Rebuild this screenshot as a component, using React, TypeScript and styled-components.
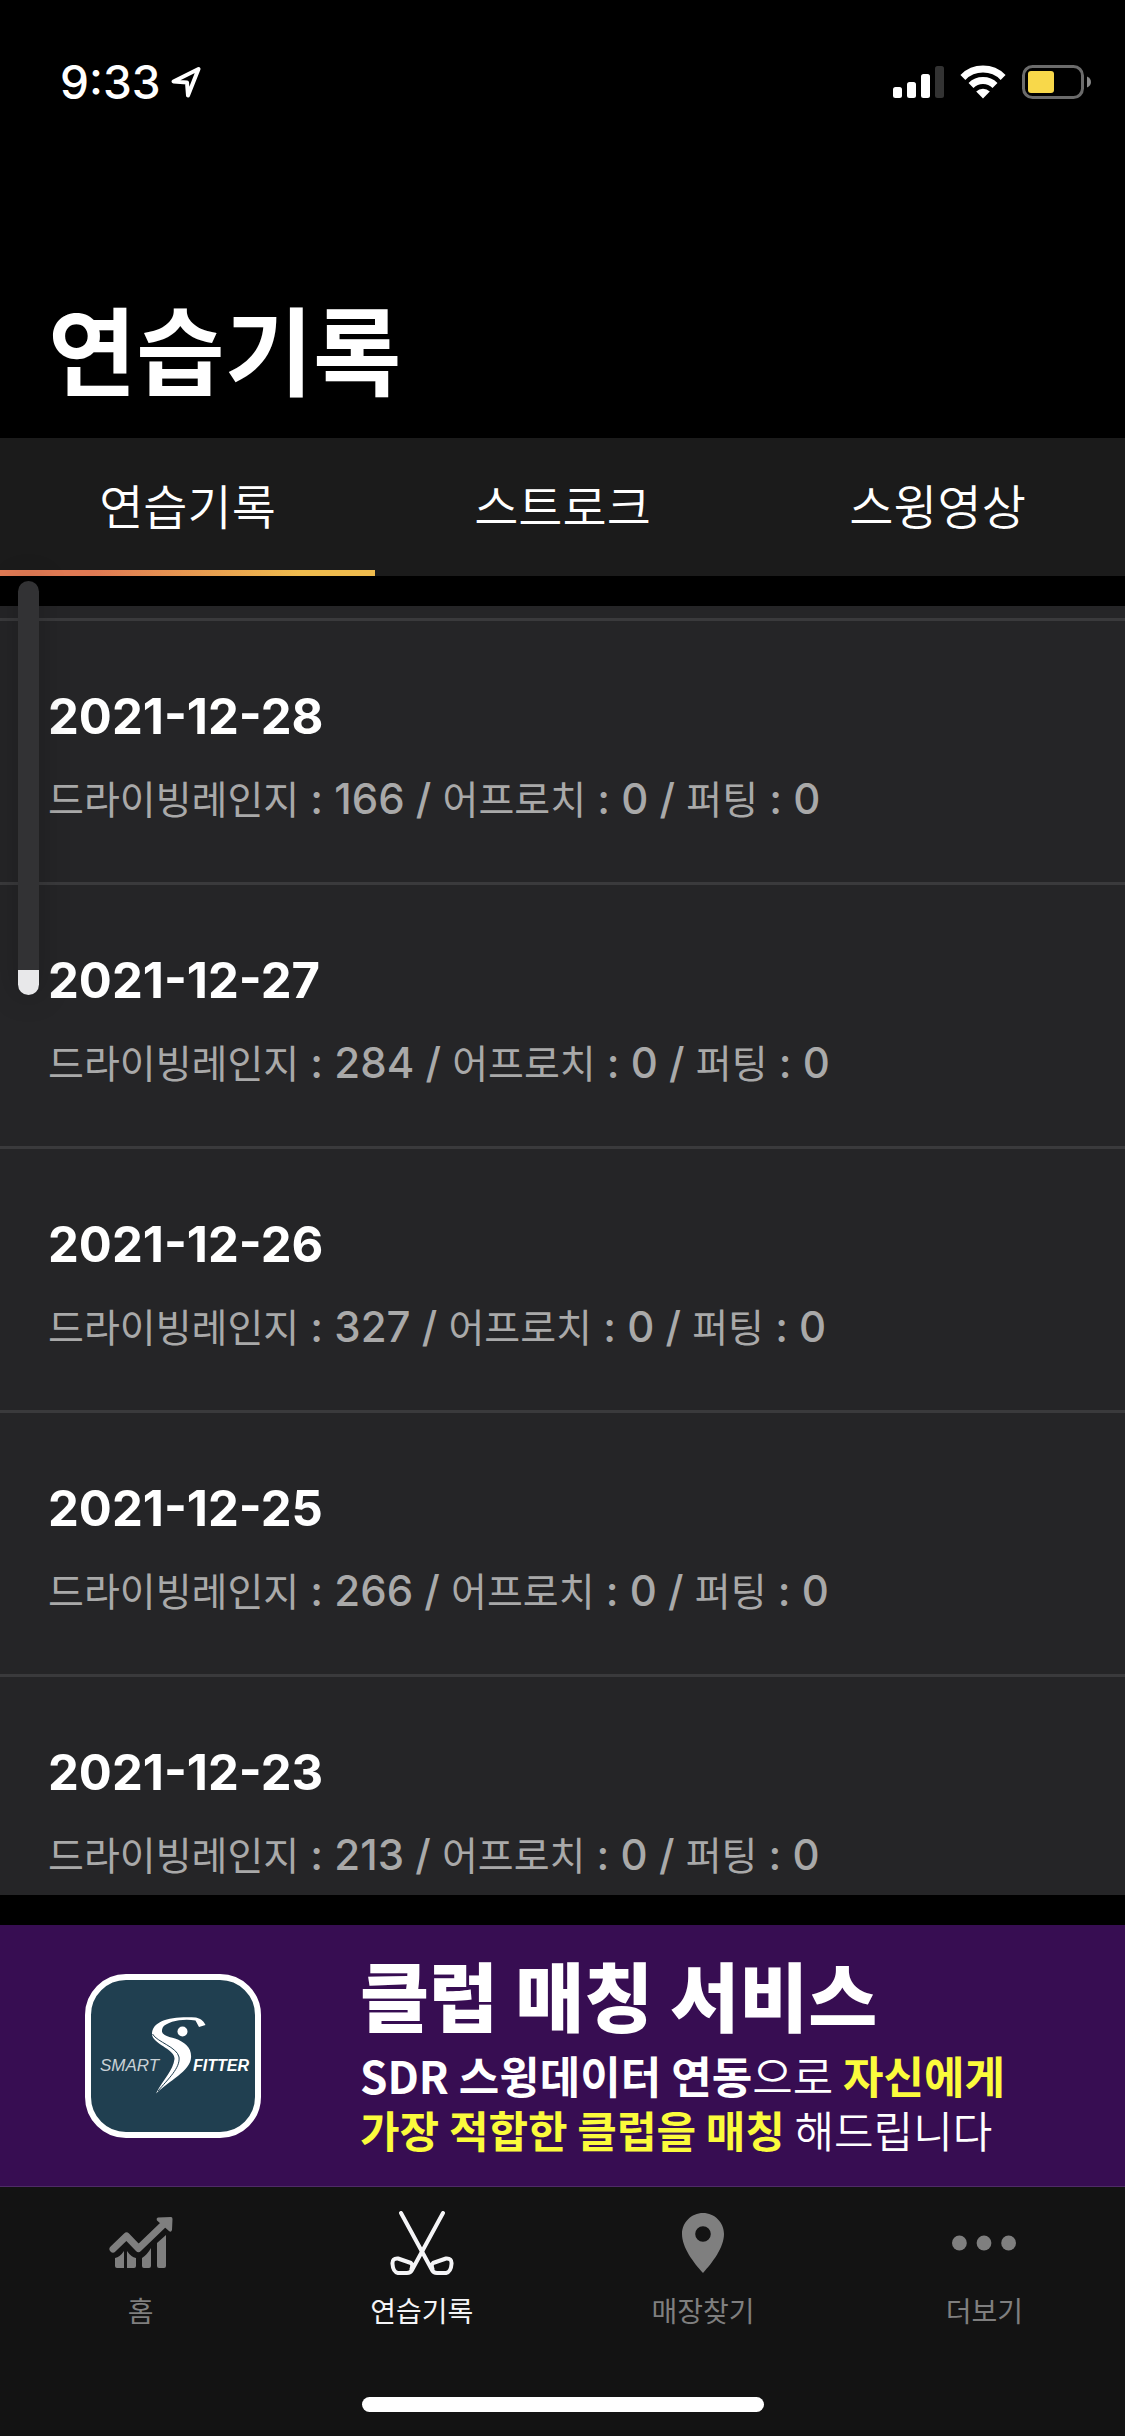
import React, { useState } from "react";
import styled, { createGlobalStyle } from "styled-components";

const GlobalStyle = createGlobalStyle`
  *, *::before, *::after { box-sizing: border-box; }
  body {
    margin: 0;
    background: #000;
    color: #fff;
    font-family: Inter, "Noto Sans CJK KR", sans-serif;
  }
  h1, h2, p { margin: 0; }
  button { font: inherit; color: inherit; background: none; border: 0; padding: 0; cursor: pointer; }
  a { color: inherit; text-decoration: none; }
`;

const Screen = styled.div`
  position: relative;
  display: flex;
  flex-direction: column;
  height: 100vh;
  background: #000;
`;

const StatusBar = styled.div`
  display: flex;
  align-items: center;
  justify-content: space-between;
  height: 164px;
  padding: 0 34px 0 60px;
`;

const StatusGroup = styled.div<{ $gap: number }>`
  display: flex;
  align-items: center;
  gap: ${(p) => p.$gap}px;
`;

const Clock = styled.span`
  font-size: 46px;
  line-height: 56px;
  font-weight: 500;
`;

const Header = styled.header`
  display: flex;
  align-items: flex-end;
  height: 274px;
  padding: 0 48px 37px;
`;

const Title = styled.h1`
  font-family: "Noto Sans CJK KR", sans-serif;
  font-size: 96px;
  line-height: 108px;
  font-weight: 700;
`;

const Tabs = styled.div`
  display: grid;
  grid-template-columns: repeat(3, 1fr);
  height: 138px;
  margin-bottom: 30px;
  background: #1b1b1b;
`;

const Tab = styled.button`
  position: relative;
  padding-bottom: 6px;
  font-family: "Noto Sans CJK KR", sans-serif;
  font-size: 48px;
  line-height: 60px;
  font-weight: 350;

  &[aria-selected="true"]::after {
    content: "";
    position: absolute;
    left: 0;
    right: 0;
    bottom: 0;
    height: 6px;
    background: linear-gradient(90deg, #e07a54 25%, #f0bc4e 80%);
  }
`;

const List = styled.ul`
  flex: 1;
  min-height: 0;
  overflow: hidden;
  margin: 0;
  padding: 12px 0 0;
  list-style: none;
  background: #252527;
`;

const Row = styled.li`
  height: 264px;
  padding: 64px 48px 0;
  border-top: 3px solid #3a3a3c;
`;

const RowDate = styled.h2`
  font-size: 49px;
  line-height: 64px;
  font-weight: 700;
`;

const RowDetail = styled.p`
  margin-top: 16px;
  font-size: 42px;
  line-height: 64px;
  font-weight: 450;
  color: #a9a9a9;
  white-space: nowrap;
`;

const Category = styled.span`
  font-family: "Noto Sans CJK KR", sans-serif;
  font-size: 39px;
  font-weight: 400;
`;

const Volume = styled.input<{ $level: number }>`
  position: absolute;
  top: 581px;
  left: 18px;
  width: 21px;
  height: 414px;
  margin: 0;
  appearance: none;
  writing-mode: vertical-lr;
  direction: rtl;
  border-radius: 11px;
  background: linear-gradient(0deg, #e8e8ea ${(p) => p.$level}%, #323234 ${(p) => p.$level}%);
  box-shadow: 0 0 30px rgba(0, 0, 0, 0.25);

  &::-webkit-slider-thumb {
    appearance: none;
    width: 21px;
    height: 1px;
    background: transparent;
  }
`;

const Banner = styled.a`
  display: flex;
  align-items: center;
  height: 262px;
  margin-top: 30px;
  padding-left: 85px;
  gap: 99px;
  background: #370d52;
  border-bottom: 1px solid #4f2a68;
  font-family: "Noto Sans CJK KR", sans-serif;
`;

const BannerCopy = styled.div`
  padding-bottom: 4px;
`;

const BannerTitle = styled.h2`
  margin-bottom: 12px;
  font-size: 75px;
  line-height: 84px;
  font-weight: 900;
`;

const BannerText = styled.p<{ $size: number }>`
  font-size: ${(p) => p.$size}px;
  line-height: 54px;
  font-weight: 350;
  white-space: nowrap;
`;

const Strong = styled.b<{ $accent?: boolean }>`
  font-weight: 700;
  color: ${(p) => (p.$accent ? "#fbfb3c" : "#fff")};
`;

const TabBar = styled.nav`
  position: relative;
  display: grid;
  grid-template-columns: repeat(4, 1fr);
  height: 249px;
  padding-top: 24px;
  background: #131313;
`;

const TabBarLink = styled.a`
  display: flex;
  flex-direction: column;
  align-items: center;
  gap: 15px;
  font-family: "Noto Sans CJK KR", sans-serif;
  font-size: 28px;
  line-height: 40px;
  color: #7f7f7f;

  &[aria-current="page"] { color: #f5f5f7; }
`;

const HomeIndicator = styled.div`
  position: absolute;
  left: 50%;
  bottom: 24px;
  width: 402px;
  height: 15px;
  margin-left: -201px;
  border-radius: 8px;
  background: #fff;
`;

const LocationIcon = () => (
  <svg width="30" height="32" viewBox="0 0 30 32" fill="none" stroke="#fff" strokeWidth="4" strokeLinejoin="round">
    <path d="M2.5 15.5 L27.5 3 L17 29.5 L16 16.5 Z" />
  </svg>
);

const SignalIcon = () => (
  <svg width="51" height="32" viewBox="0 0 51 32" fill="#fff">
    <rect x="0" y="21" width="9" height="11" rx="2.5" />
    <rect x="14" y="16" width="9" height="16" rx="2.5" />
    <rect x="28" y="8" width="9" height="24" rx="2.5" />
    <rect x="42" y="0" width="9" height="32" rx="2.5" fill="#333" />
  </svg>
);

const WifiIcon = () => (
  <svg width="46" height="34" viewBox="0 0 46 34" fill="none" stroke="#fff" strokeWidth="7">
    <path d="M2.9 12.4 A28.5 28.5 0 0 1 43.1 12.4" />
    <path d="M11 20.4 A17 17 0 0 1 35 20.4" />
    <path d="M23 33.5 L16.2 26.6 A9.6 9.6 0 0 1 29.8 26.6 Z" fill="#fff" stroke="none" />
  </svg>
);

const BatteryIcon = () => (
  <svg width="69" height="34" viewBox="0 0 69 34">
    <rect x="1.5" y="1.5" width="59" height="31" rx="9" fill="none" stroke="#6b6b6b" strokeWidth="3" />
    <rect x="6" y="6" width="26" height="22" rx="3" fill="#f8d84a" />
    <path d="M65 11.5 C70.3 13.5 70.3 20.5 65 22.5 Z" fill="#8a8a8a" />
  </svg>
);

const SmartFitterLogo = () => (
  <svg width="176" height="164" viewBox="0 0 176 164" fontFamily="Liberation Sans, sans-serif" fontStyle="italic" fontSize="17" fill="#fff">
    <rect x="3" y="3" width="170" height="158" rx="38" fill="#203f50" stroke="#fff" strokeWidth="6" />
    <path d="M120.5 51 L114 53 L110.5 46.5 C98 44 82 47.5 78 53 C74.5 60 80 62 90 64.5 C100 68 107 74 106 84 C105 97 84 107 71 119.5 C79 104 88 97 89.5 85 C90.5 75 67 70 67 60 C67 47 85 42 111 43.5 C115 44.5 118 46 120.5 51 Z" />
    <path d="M67.5 60 C72 68 92 73 94 83 C95.5 94 83 105 73 117" fill="none" stroke="#203f50" strokeWidth="1" />
    <circle cx="97.5" cy="57.5" r="5" />
    <text x="15" y="97" fill="#c9d1d6">SMART</text>
    <text x="108" y="97" fontWeight="700" fontSize="16">FITTER</text>
  </svg>
);

const ChartIcon = () => (
  <svg width="64" height="64" viewBox="0 0 64 64" fill="currentColor">
    <path d="M4 38 L17.5 25 L29.5 37.5 L55 13" fill="none" stroke="currentColor" strokeWidth="7" strokeLinecap="round" strokeLinejoin="round" />
    <path d="M49 6.5 L62 6 Q63.5 6 63.5 8 L63 19 Q62 22 60 20 L48 9.5 Q47 7 49 6.5 Z" />
    <path d="M6 47 Q11 46 15 40 V57 H8 Q6 57 6 55 Z" />
    <path d="M18 40 Q22 46 27 47 V55 Q27 57 25 57 H18 Z" />
    <path d="M33 47 Q38 44 42 37 V55 Q42 57 40 57 H35 Q33 57 33 55 Z" />
    <path d="M48 32 L57 24 V55 Q57 57 55 57 H50 Q48 57 48 55 Z" />
  </svg>
);

const ClubsIcon = () => (
  <svg width="64" height="64" viewBox="0 0 64 64" fill="none" stroke="currentColor" strokeWidth="4" strokeLinecap="round" strokeLinejoin="round">
    <path d="M53 2 L22 59 Q20.5 62 17 62 H8 Q3 61 2.5 53 Q2 47 8 47.5 L21 52 Q23 53.5 21.5 58" />
    <path d="M11 2 L42 59 Q43.5 62 47 62 H56 Q61 61 61.5 53 Q62 47 56 47.5 L43 52 Q41 53.5 42.5 58" />
  </svg>
);

const PinIcon = () => (
  <svg width="64" height="64" viewBox="0 0 64 64" fill="currentColor">
    <path fillRule="evenodd" d="M32 2 C43.6 2 53 11.4 53 23 C53 36.5 41.5 51.5 32 62 C22.5 51.5 11 36.5 11 23 C11 11.4 20.4 2 32 2 Z M32 15.2 A7.8 7.8 0 1 0 32 30.8 A7.8 7.8 0 1 0 32 15.2 Z" />
  </svg>
);

const MoreIcon = () => (
  <svg width="64" height="64" viewBox="0 0 64 64" fill="currentColor">
    <circle cx="7.4" cy="32" r="7.4" />
    <circle cx="32" cy="32" r="7.4" />
    <circle cx="56.6" cy="32" r="7.4" />
  </svg>
);

const tabs = ["연습기록", "스트로크", "스윙영상"];

const records = [
  { date: "2021-12-28", range: 166, approach: 0, putting: 0 },
  { date: "2021-12-27", range: 284, approach: 0, putting: 0 },
  { date: "2021-12-26", range: 327, approach: 0, putting: 0 },
  { date: "2021-12-25", range: 266, approach: 0, putting: 0 },
  { date: "2021-12-23", range: 213, approach: 0, putting: 0 },
];

const destinations = [
  { label: "홈", Icon: ChartIcon },
  { label: "연습기록", Icon: ClubsIcon },
  { label: "매장찾기", Icon: PinIcon },
  { label: "더보기", Icon: MoreIcon },
];

export default function App() {
  const [tab, setTab] = useState(0);
  const [volume, setVolume] = useState(6);

  return (
    <>
      <GlobalStyle />
      <Screen>
        <StatusBar>
          <StatusGroup $gap={10}>
            <Clock>9:33</Clock>
            <LocationIcon />
          </StatusGroup>
          <StatusGroup $gap={16}>
            <SignalIcon />
            <WifiIcon />
            <BatteryIcon />
          </StatusGroup>
        </StatusBar>
        <Header>
          <Title>연습기록</Title>
        </Header>
        <Tabs role="tablist">
          {tabs.map((label, i) => (
            <Tab key={label} type="button" role="tab" aria-selected={i === tab} onClick={() => setTab(i)}>
              {label}
            </Tab>
          ))}
        </Tabs>
        <List>
          {records.map((r) => (
            <Row key={r.date}>
              <RowDate>{r.date}</RowDate>
              <RowDetail>
                <Category>드라이빙레인지</Category> : {r.range} / <Category>어프로치</Category> : {r.approach} /{" "}
                <Category>퍼팅</Category> : {r.putting}
              </RowDetail>
            </Row>
          ))}
        </List>
        <Banner href="#club-matching">
          <SmartFitterLogo />
          <BannerCopy>
            <BannerTitle>클럽 매칭 서비스</BannerTitle>
            <BannerText $size={44}>
              <Strong>SDR 스윙데이터 연동</Strong>으로 <Strong $accent>자신에게</Strong>
            </BannerText>
            <BannerText $size={43}>
              <Strong $accent>가장 적합한 클럽을 매칭</Strong> 해드립니다
            </BannerText>
          </BannerCopy>
        </Banner>
        <TabBar>
          {destinations.map(({ label, Icon }, i) => (
            <TabBarLink key={label} href={`#tab-${i}`} aria-current={i === 1 ? "page" : undefined}>
              <Icon />
              {label}
            </TabBarLink>
          ))}
          <HomeIndicator />
        </TabBar>
        <Volume
          type="range"
          min={0}
          max={100}
          value={volume}
          $level={volume}
          aria-label="음량"
          onChange={(e: React.ChangeEvent<HTMLInputElement>) => setVolume(Number(e.target.value))}
        />
      </Screen>
    </>
  );
}
